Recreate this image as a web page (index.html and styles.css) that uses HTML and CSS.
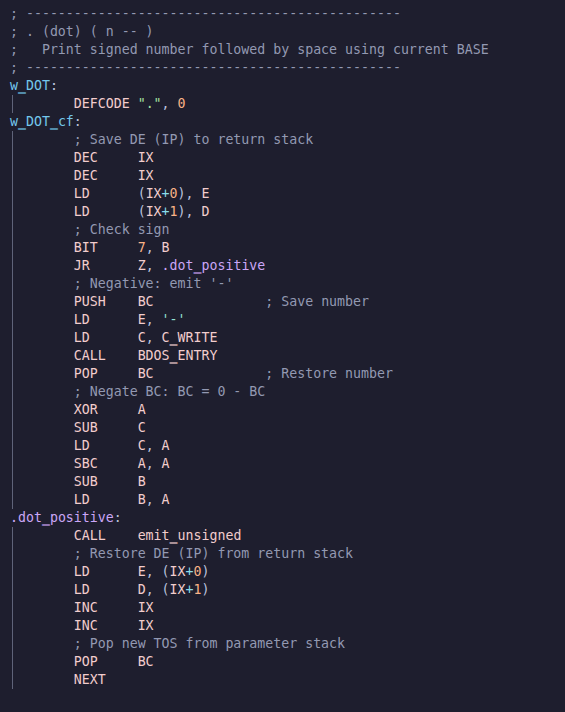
FILE: index.html
```html
<!DOCTYPE html>
<html lang="en">
<head>
<meta charset="utf-8">
<title>dot.asm</title>
<link rel="stylesheet" href="styles.css">
</head>
<body>
<div class="editor">
<div class="ln"><span class="c">; -----------------------------------------------</span></div>
<div class="ln"><span class="c">; . (dot) ( n -- )</span></div>
<div class="ln"><span class="c">;   Print signed number followed by space using current BASE</span></div>
<div class="ln"><span class="c">; -----------------------------------------------</span></div>
<div class="ln"><span class="lb">w<span class="u">_</span>DOT</span><span class="p">:</span></div>
<div class="ln g">        <span class="m">DEFCODE</span> <span class="s">"."</span><span class="p">,</span> <span class="n">0</span></div>
<div class="ln"><span class="lb">w<span class="u">_</span>DOT<span class="u">_</span>cf</span><span class="p">:</span></div>
<div class="ln g">        <span class="c">; Save DE (IP) to return stack</span></div>
<div class="ln g">        <span class="m">DEC     IX</span></div>
<div class="ln g">        <span class="m">DEC     IX</span></div>
<div class="ln g">        <span class="m">LD      </span><span class="p">(</span><span class="m">IX</span><span class="o">+</span><span class="n">0</span><span class="p">),</span> <span class="m">E</span></div>
<div class="ln g">        <span class="m">LD      </span><span class="p">(</span><span class="m">IX</span><span class="o">+</span><span class="n">1</span><span class="p">),</span> <span class="m">D</span></div>
<div class="ln g">        <span class="c">; Check sign</span></div>
<div class="ln g">        <span class="m">BIT     </span><span class="n">7</span><span class="p">,</span> <span class="m">B</span></div>
<div class="ln g">        <span class="m">JR      Z</span><span class="p">,</span> <span class="lc">.dot<span class="u">_</span>positive</span></div>
<div class="ln g">        <span class="c">; Negative: emit '-'</span></div>
<div class="ln g">        <span class="m">PUSH    BC</span>              <span class="c">; Save number</span></div>
<div class="ln g">        <span class="m">LD      E</span><span class="p">,</span> <span class="ch">'-'</span></div>
<div class="ln g">        <span class="m">LD      C</span><span class="p">,</span> <span class="m">C<span class="u">_</span>WRITE</span></div>
<div class="ln g">        <span class="m">CALL    BDOS<span class="u">_</span>ENTRY</span></div>
<div class="ln g">        <span class="m">POP     BC</span>              <span class="c">; Restore number</span></div>
<div class="ln g">        <span class="c">; Negate BC: BC = 0 - BC</span></div>
<div class="ln g">        <span class="m">XOR     A</span></div>
<div class="ln g">        <span class="m">SUB     C</span></div>
<div class="ln g">        <span class="m">LD      C</span><span class="p">,</span> <span class="m">A</span></div>
<div class="ln g">        <span class="m">SBC     A</span><span class="p">,</span> <span class="m">A</span></div>
<div class="ln g">        <span class="m">SUB     B</span></div>
<div class="ln g">        <span class="m">LD      B</span><span class="p">,</span> <span class="m">A</span></div>
<div class="ln"><span class="lc">.dot<span class="u">_</span>positive</span><span class="p">:</span></div>
<div class="ln g">        <span class="m">CALL    emit<span class="u">_</span>unsigned</span></div>
<div class="ln g">        <span class="c">; Restore DE (IP) from return stack</span></div>
<div class="ln g">        <span class="m">LD      E</span><span class="p">,</span> <span class="p">(</span><span class="m">IX</span><span class="o">+</span><span class="n">0</span><span class="p">)</span></div>
<div class="ln g">        <span class="m">LD      D</span><span class="p">,</span> <span class="p">(</span><span class="m">IX</span><span class="o">+</span><span class="n">1</span><span class="p">)</span></div>
<div class="ln g">        <span class="m">INC     IX</span></div>
<div class="ln g">        <span class="m">INC     IX</span></div>
<div class="ln g">        <span class="c">; Pop new TOS from parameter stack</span></div>
<div class="ln g">        <span class="m">POP     BC</span></div>
<div class="ln g">        <span class="m">NEXT</span></div>
<div class="ln"> </div>
<div class="ln"><span class="c">; -----------------------------------------------</span></div>
</div>
</body>
</html>
```
FILE: styles.css
```css
html, body {
  margin: 0;
  padding: 0;
  background: #1e1e2e;
  height: 100%;
  overflow: hidden;
}

.editor {
  padding: 5px 0 0 10px;
  font-family: "DejaVu Sans Mono", "Liberation Mono", monospace;
  font-size: 13.25px;
  line-height: 18px;
  color: #cdd6f4;
}

.ln {
  white-space: pre;
  height: 18px;
}

.ln.g {
  background: linear-gradient(#5f6379, #5f6379) no-repeat 2px 0 / 1px 100%;
}

.u { text-shadow: 0 -0.8px currentColor; }

.c { color: #9399b2; }
.lb { color: #74c7ec; }
.lc { color: #cba6f7; }
.p { color: #bac2de; }
.m { color: #f2cdcd; }
.n { color: #fab387; }
.s { color: #a6e3a1; }
.ch { color: #94e2d5; }
.o { color: #89dceb; }
```
